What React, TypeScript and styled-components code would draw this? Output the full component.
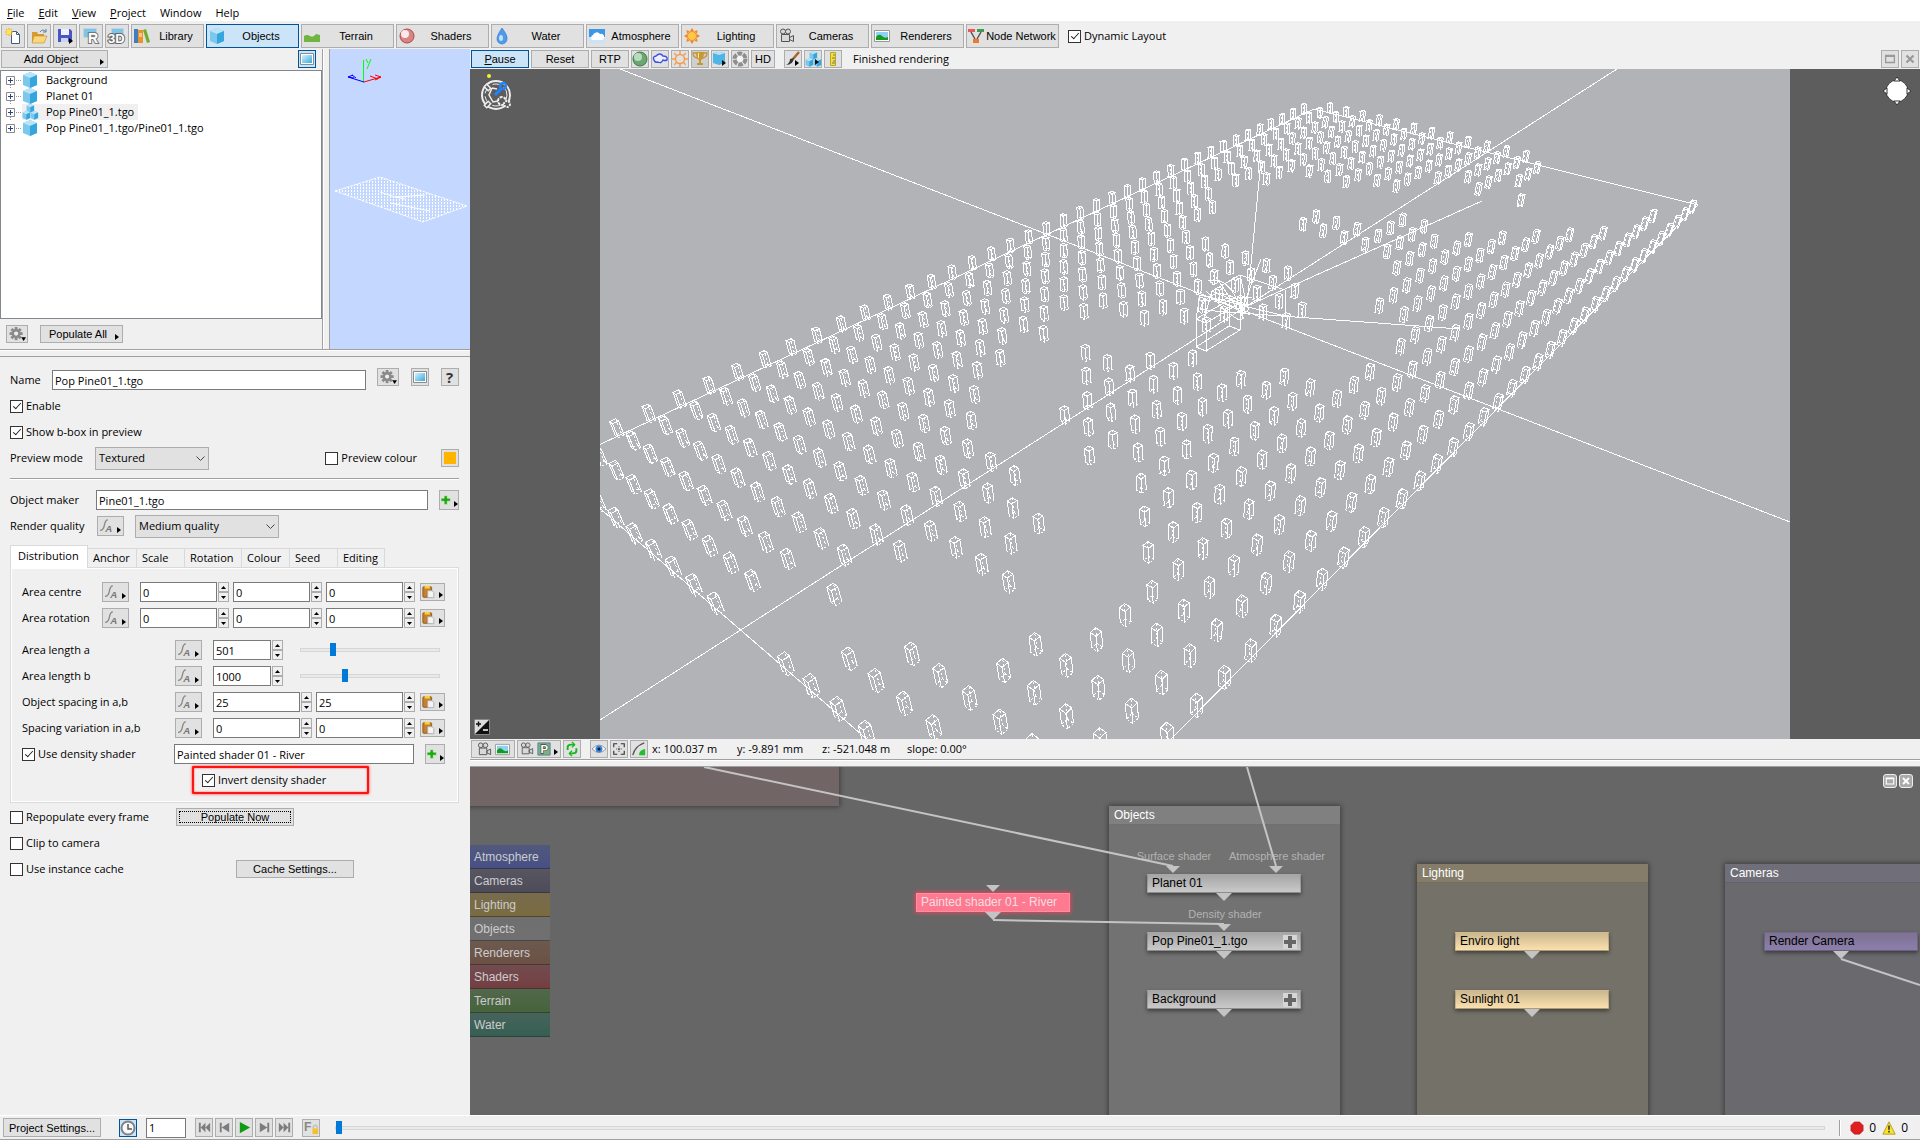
import React from 'react';
import styled, { createGlobalStyle, css } from 'styled-components';

const UI = '"Open Sans", "Noto Sans", sans-serif';
const ARIAL = '"Liberation Sans", Arial, sans-serif';

const Global = createGlobalStyle`
  *, *::before, *::after { box-sizing: border-box; }
  html, body { margin: 0; height: 100%; overflow: hidden; }
  body { font-family: ${UI}; font-size: 11px; line-height: 16px; color: #000; background: #f0f0f0; }
  button, input, select { font: inherit; color: inherit; margin: 0; }
  svg { display: block; flex: none; }
`;

/* ---------- icons ---------- */

const cube = (
  <>
    <path d="M8 0l7 3v10l-7 3-7-3V3z" fill="#7cc8ec" />
    <path d="M8 0l7 3-7 3-7-3z" fill="#b9e4f8" />
    <path d="M8 6l7-3v10l-7 3z" fill="#35a6dd" />
  </>
);
const cam = (
  <g fill="#d8d8d8" stroke="#555">
    <circle cx="4" cy="3.500" r="2.500" />
    <circle cx="9" cy="3.500" r="2.500" />
    <path d="M2.500 6.500h8v7h-8zM10.500 9.500l4-2v6l-4-2z" />
  </g>
);
const picture = (
  <>
    <path d="M.5 2.500h15v11H.5z" fill="#fff" stroke="#999" />
    <path d="M2 4h12v8H2z" fill="#8fd0f5" />
    <path d="M2 9q3-4 6-1t6 1v3H2z" fill="#159a1c" />
  </>
);
const cubes = (
  <>
    <g transform="translate(4 0) scale(.54)">{cube}</g>
    <g transform="translate(0 7) scale(.54)">{cube}</g>
    <g transform="translate(8 7) scale(.54)">{cube}</g>
  </>
);
const spikes = [0, 45, 90, 135, 180, 225, 270, 315];

const ICONS: Record<string, React.ReactNode> = {
  newFile: (
    <>
      <path d="M6.500 3.500h5l3 3v9h-8z" fill="#fff" stroke="#445d86" />
      <path d="M11.500 3.500v3h3" fill="none" stroke="#445d86" />
      {spikes.map((a) => (
        <path key={a} d="M4 4V0" stroke="#f5a800" transform={`rotate(${a} 4 4)`} />
      ))}
      <circle cx="4" cy="4" r="2.500" fill="#ffe54a" />
    </>
  ),
  open: (
    <>
      <path d="M1 4h5l1 2h6v8H1z" fill="#d89b32" />
      <path d="M3 8h13l-3 7H1z" fill="#fbd77c" stroke="#c08a2c" strokeWidth=".6" />
      <path d="M9 4q3-4 6 0M15 1v3h-3" fill="none" stroke="#5d7fa8" />
    </>
  ),
  save: (
    <>
      <path d="M1 1h12l2 2v11H1z" fill="#4a55c4" />
      <path d="M4 1h8v6H4z" fill="#eef1ff" />
      <path d="M4 10h7v4H4z" fill="#cdd3f5" />
      <path d="M12 10v6l4-3z" fill="#000" />
    </>
  ),
  render: (
    <>
      <path d="M.5.5h13v9H.5z" fill="#7ec5ea" stroke="#c5d3dc" />
      <text x="5" y="15" fontFamily={ARIAL} fontWeight="bold" fontSize="14" fill="#fff" stroke="#777" strokeWidth="2" paintOrder="stroke">R</text>
    </>
  ),
  threeD: (
    <>
      <path d="M2.500.5h12v8h-12z" fill="#7ec5ea" stroke="#c5d3dc" />
      <text x="-1" y="15" fontFamily={ARIAL} fontWeight="bold" fontSize="13" fill="#fff" stroke="#666" strokeWidth="2" paintOrder="stroke">3D</text>
    </>
  ),
  library: (
    <>
      <path d="M0 1h4v14H0z" fill="#3d7fb8" />
      <path d="M4 2h5v13H4z" fill="#f0902a" />
      <path d="M5 5h3v4H5z" fill="#fbc88e" />
      <path d="M9 2l3-1 4 13-3 1z" fill="#6fae2f" />
    </>
  ),
  cube,
  cubes,
  terrain: <path d="M0 8q3-2 6 0t6-2l4 1v7H0z" fill="#6fb53f" />,
  shader: (
    <>
      <circle cx="8" cy="8" r="7" fill="#d98484" stroke="#b04848" />
      <circle cx="6" cy="6" r="4" fill="#fbeaea" />
    </>
  ),
  water: (
    <>
      <path d="M8 0q6 8 5 11a5 5 0 0 1-10 0q0-4 5-11z" fill="#4d9bea" stroke="#2d6fc4" strokeWidth=".6" />
      <ellipse cx="7" cy="10" rx="2" ry="3" fill="#c2e1fb" />
    </>
  ),
  atmosphere: (
    <>
      <path d="M0 1h16v14H0z" fill="#3d97e8" />
      <path d="M0 9h16v6H0z" fill="#c8e4fa" />
      <path d="M3 12a3 3 0 0 1 1-5 4 4 0 0 1 7-1 3 3 0 0 1 2 6z" fill="#fff" />
    </>
  ),
  lighting: (
    <>
      {spikes.map((a) => (
        <path key={a} d="M6 3l2-3 2 3z" fill="#f08a24" transform={`rotate(${a} 8 8)`} />
      ))}
      <circle cx="8" cy="8" r="4.500" fill="#fdc84a" stroke="#f08a24" />
    </>
  ),
  sun: (
    <g fill="none" stroke="#f59a4a" strokeWidth="1.400">
      {spikes.map((a) => (
        <path key={a} d="M8 0v3" transform={`rotate(${a} 8 8)`} />
      ))}
      <circle cx="8" cy="8" r="4.500" />
    </g>
  ),
  camera: cam,
  picture,
  nodes: (
    <>
      <path d="M3 4l4 7M13 4l-4 7" stroke="#555" strokeWidth="1.500" />
      <path d="M0 1h7v3H0z" fill="#e85858" />
      <path d="M9 1h7v3H9z" fill="#3f9a4e" />
      <path d="M5 11h6v4H5z" fill="#f0782a" />
    </>
  ),
  panel: (
    <>
      <defs>
        <linearGradient id="screen" x1="0" y1="0" x2="1" y2="1">
          <stop offset="0" stopColor="#d4f1fc" />
          <stop offset="1" stopColor="#3aa9dd" />
        </linearGradient>
      </defs>
      <path d="M1.500 2.500h13v11h-13z" fill="#fff" stroke="#8a8a8a" />
      <path d="M3 4h10v8H3z" fill="url(#screen)" />
    </>
  ),
  ball: (
    <>
      <circle cx="8" cy="8" r="7" fill="#6aa873" stroke="#3f7a48" />
      <circle cx="6" cy="6" r="4" fill="#b9dcbe" />
    </>
  ),
  cloud: <path d="M2 9q-2-3 2-4 4-4 7 0 5 0 4 4-3 1-4 0-2 4-5 2-3 1-4-2z" fill="#eef" stroke="#3a50e0" strokeWidth="1.400" />,
  cup: (
    <>
      <path d="M4 1h8q0 7-3 8v3h2v2H5v-2h2V9Q4 8 4 1z" fill="#c89632" />
      <path d="M4 2H1q0 4 4 5M12 2h3q0 4-4 5" fill="none" stroke="#c89632" strokeWidth="1.300" />
      <path d="M6 2h1v5H6z" fill="#fbe9a8" />
    </>
  ),
  boxPlay: (
    <>
      <path d="M1 2l6-1 6 1v10l-6 2-6-2z" fill="#4fb4e6" />
      <path d="M1 2l6-1 6 1-6 2z" fill="#b9e4f8" />
      <path d="M10 9v6l4-3z" fill="#111" />
    </>
  ),
  shutter: (
    <>
      <circle cx="8" cy="8" r="5.500" fill="none" stroke="#8e8e8e" strokeWidth="4" strokeDasharray="4.500 1.200" />
      <circle cx="8" cy="8" r="3" fill="#f4f4f4" />
    </>
  ),
  brush: (
    <>
      <path d="M14 1L8 8" stroke="#a8642a" strokeWidth="2.500" />
      <path d="M9 7q-1 7-8 7 4-2 4-6z" fill="#333" />
      <path d="M10 9v6l4-3z" fill="#000" />
    </>
  ),
  cubesPlay: (
    <>
      {cubes}
      <path d="M10 8v6l4-3z" fill="#111" />
    </>
  ),
  ruler: (
    <>
      <path d="M5.500 1.500h5v13h-5z" fill="#f5e03a" stroke="#b8a62a" />
      <path d="M10 4H8M10 7H7M10 10H8M10 12H7" stroke="#776" />
    </>
  ),
  gear: (
    <>
      {spikes.map((a) => (
        <path key={a} d="M5 0h3v4H5z" fill="#8a8a8a" transform={`rotate(${a} 6.500 7)`} />
      ))}
      <circle cx="6.500" cy="7" r="3.500" fill="#eee" stroke="#8a8a8a" strokeWidth="2.500" />
      <path d="M12 11h5l-2.500 4z" fill="#000" />
    </>
  ),
  help: <text x="4" y="14" fontFamily={UI} fontWeight="bold" fontSize="15" fill="#333">?</text>,
  func: (
    <>
      <path d="M0 13q4 0 5-6t4-6" fill="none" stroke="#888" strokeWidth="1.500" />
      <text x="6" y="15" fontFamily={ARIAL} fontWeight="bold" fontStyle="italic" fontSize="11" fill="#777">A</text>
    </>
  ),
  plus: <path d="M5 1h5v4h5v5h-5v5H5v-5H0V5h5z" fill="#1fa80f" stroke="#d5f0d0" />,
  paste: (
    <>
      <rect x="1" y="2" width="10" height="12" rx="1" fill="#c87f2c" stroke="#8a5518" />
      <path d="M3 1h6v3H3z" fill="#f7d23c" />
      <path d="M6.500 6.500h5l2 2v6h-7z" fill="#f4f4f4" stroke="#aaa" />
    </>
  ),
  clock: (
    <>
      <circle cx="8" cy="8" r="6.500" fill="#fafafa" stroke="#7b8288" strokeWidth="2" />
      <path d="M8 4v5h4" fill="none" stroke="#555" strokeWidth="1.500" />
    </>
  ),
  first: <path d="M2 3h2v10H2zM9 3v10L4 8zM14 3v10L9 8z" fill="#7c7c7c" />,
  prev: <path d="M3 3h2v10H3zM13 3v10L5 8z" fill="#7c7c7c" />,
  play: <path d="M3 2v12l11-6z" fill="#0f9b12" />,
  next: <path d="M11 3h2v10h-2zM3 3v10l8-5z" fill="#7c7c7c" />,
  last: <path d="M12 3h2v10h-2zM7 3v10l5-5zM2 3v10l5-5z" fill="#7c7c7c" />,
  lock: (
    <>
      <text x="0" y="12" fontFamily={ARIAL} fontWeight="bold" fontSize="13" fill="#888">F</text>
      <path d="M10 9V7q2-3 4 0v2" fill="none" stroke="#bbb" strokeWidth="1.400" />
      <path d="M9 9h6v6H9z" fill="#f5c02c" />
    </>
  ),
  refresh: (
    <g fill="none" stroke="#17b81f" strokeWidth="2.200">
      <path d="M3 9V6q0-3 4-3h4M13 7v3q0 3-4 3H5" />
      <path d="M8 0l3 3-3 3M8 10l-3 3 3 3" strokeWidth="1.500" />
    </g>
  ),
  eye: (
    <>
      <path d="M0 8q8-9 16 0-8 8-16 0z" fill="#fff" stroke="#889" />
      <circle cx="8" cy="8" r="4" fill="#3f87dd" />
      <circle cx="8" cy="8" r="1.800" fill="#123" />
    </>
  ),
  frame: (
    <g fill="none" stroke="#333" strokeWidth="1.300">
      <path d="M2 6V2h4M10 2h4v4M14 10v4h-4M6 14H2v-4" />
      <path d="M8 5v1M8 10v1M5 8h1M10 8h1M8 7v2M7 8h2" />
    </g>
  ),
  curve: (
    <>
      <path d="M1 15Q3 5 14 1" fill="none" stroke="#555" strokeWidth="1.500" />
      <path d="M8 15q0-6 7-7v7z" fill="#1fc02a" />
    </>
  ),
  pBadge: (
    <>
      <path d="M1 1h14v14H1z" fill="#7fb07f" stroke="#4f7f9f" />
      <text x="4" y="13" fontFamily={ARIAL} fontWeight="bold" fontSize="13" fill="#fff" stroke="#444" strokeWidth="1.500" paintOrder="stroke">P</text>
    </>
  ),
  maximize: <path d="M3 4h10v8H3zM3 5h10" fill="none" stroke="currentColor" strokeWidth="1.500" />,
  close: <path d="M4 4l8 8M12 4l-8 8" fill="none" stroke="currentColor" strokeWidth="2.500" />,
  stop: <path d="M5 1h6l4 4v6l-4 4H5l-4-4V5z" fill="#e02020" stroke="#a81010" strokeWidth=".6" />,
  warn: (
    <>
      <path d="M8 1l7 14H1z" fill="#fbe32a" stroke="#a8961a" />
      <path d="M8 5v5M8 11v2" stroke="#333" strokeWidth="1.800" />
    </>
  ),
};

const Icon = ({ name, size = 16 }: { name: string; size?: number }) => (
  <svg width={size} height={size} viewBox="0 0 16 16" aria-hidden="true" overflow="visible">
    {ICONS[name]}
  </svg>
);

const Arrow = () => (
  <svg width="4" height="6" viewBox="0 0 4 6" aria-hidden="true">
    <path d="M0 0v6l4-3z" />
  </svg>
);

/* ---------- controls ---------- */

const Btn = styled.button<{ $w?: number; $h?: number; $on?: boolean; $down?: boolean; $wide?: boolean }>`
  display: flex;
  flex: none;
  align-items: center;
  justify-content: ${(p) => (p.$wide ? 'space-between' : 'center')};
  gap: 3px;
  width: ${(p) => (p.$w ? `${p.$w}px` : 'auto')};
  height: ${(p) => p.$h ?? 18}px;
  padding: 0 ${(p) => (p.$wide ? 3 : 0)}px;
  border: 1px solid ${(p) => (p.$on ? '#005499' : '#adadad')};
  background: ${(p) => (p.$on ? '#cce4f7' : p.$down ? '#cfcfcf' : '#e1e1e1')};
  font-family: ${ARIAL};
  font-size: 11px;
  line-height: 16px;
  white-space: nowrap;
`;
const ArrowBtn = styled(Btn)`
  & > svg:last-child {
    align-self: flex-end;
    margin-bottom: 2px;
  }
`;
const BtnText = styled.span`
  flex: 1;
  text-align: center;
`;
const ModeBtn = styled(Btn)`
  padding: 0 3px 0 2px;
  gap: 2px;
`;
const FocusBtn = styled(Btn)`
  position: relative;
  &::after {
    content: '';
    position: absolute;
    inset: 2px;
    border: 1px dotted #000;
  }
`;

const Check = styled.input.attrs({ type: 'checkbox' })`
  appearance: none;
  position: relative;
  flex: none;
  width: 13px;
  height: 13px;
  border: 1px solid #333;
  background: #fff;
  &:checked::after {
    content: '';
    position: absolute;
    left: 4px;
    top: 0;
    width: 4px;
    height: 8px;
    border: solid #222;
    border-width: 0 1px 1px 0;
    transform: rotate(42deg);
  }
`;
const CheckLabel = styled.label`
  display: flex;
  align-items: center;
  gap: 3px;
  white-space: nowrap;
`;
const Box = ({ text, on }: { text: string; on?: boolean }) => (
  <CheckLabel>
    <Check defaultChecked={on} />
    {text}
  </CheckLabel>
);

const Field = styled.input<{ $w?: number }>`
  flex: ${(p) => (p.$w ? 'none' : '1')};
  min-width: 0;
  width: ${(p) => (p.$w ? `${p.$w}px` : 'auto')};
  height: 20px;
  padding: 0 2px;
  border: 1px solid #7a7a7a;
  background: #fff;
`;

const SpinWrap = styled.span`
  display: flex;
  gap: 1px;
  margin-right: 4px;
`;
const SpinCol = styled.span`
  display: grid;
  grid-template-rows: 10px 10px;
  width: 11px;
`;
const SpinBtn = styled.button`
  display: grid;
  place-items: center;
  padding: 0;
  border: 1px solid #adadad;
  background: #f0f0f0;
`;
const Spin = ({ w, value, label }: { w: number; value: string; label: string }) => (
  <SpinWrap>
    <Field $w={w} defaultValue={value} aria-label={label} />
    <SpinCol>
      <SpinBtn aria-label={`${label} up`}>
        <svg width="5" height="3" viewBox="0 0 5 3"><path d="M0 3h5L2.500 0z" /></svg>
      </SpinBtn>
      <SpinBtn aria-label={`${label} down`}>
        <svg width="5" height="3" viewBox="0 0 5 3"><path d="M0 0h5L2.500 3z" /></svg>
      </SpinBtn>
    </SpinCol>
  </SpinWrap>
);

const SelectWrap = styled.span<{ $w: number }>`
  position: relative;
  width: ${(p) => p.$w}px;
  svg { position: absolute; right: 4px; top: 9px; pointer-events: none; }
`;
const Select = styled.select`
  appearance: none;
  width: 100%;
  height: 23px;
  padding: 0 3px;
  border: 1px solid #adadad;
  border-radius: 0;
  background: #e1e1e1;
`;
const Combo = ({ w, value, id }: { w: number; value: string; id: string }) => (
  <SelectWrap $w={w}>
    <Select id={id} defaultValue={value}>
      <option>{value}</option>
    </Select>
    <svg width="9" height="6" viewBox="0 0 9 6"><path d="M.5.5l4 4 4-4" fill="none" stroke="#444" /></svg>
  </SelectWrap>
);

const Range = styled.input.attrs({ type: 'range' })<{ $w?: number }>`
  appearance: none;
  flex: ${(p) => (p.$w ? 'none' : '1')};
  width: ${(p) => (p.$w ? `${p.$w}px` : 'auto')};
  height: 14px;
  background: transparent;
  &::-webkit-slider-runnable-track {
    height: 4px;
    border: 1px solid #d6d6d6;
    background: #e7eaea;
  }
  &::-webkit-slider-thumb {
    appearance: none;
    width: 6px;
    height: 13px;
    margin-top: -6px;
    background: #007ad9;
  }
`;

/* ---------- frame ---------- */

const Shell = styled.div`
  display: flex;
  flex-direction: column;
  height: 100vh;
`;
const MenuBar = styled.nav`
  display: flex;
  gap: 14px;
  height: 21px;
  padding: 4px 7px 0;
  background: #fff;
  button { padding: 0; border: 0; background: none; line-height: 16px; height: 17px; }
`;
const ToolBar = styled.div`
  display: flex;
  align-items: center;
  gap: 2px;
  height: 28px;
  padding: 2px 1px 0;
`;
const DynamicLayout = styled.div`
  margin-left: 7px;
`;
const Body = styled.div`
  display: flex;
  flex: 1;
  min-height: 0;
`;
const Left = styled.aside`
  display: flex;
  flex-direction: column;
  flex: none;
  width: 470px;
`;
const Right = styled.main`
  display: flex;
  flex: 1;
  flex-direction: column;
  min-width: 0;
`;
const TopPane = styled.div`
  display: flex;
  height: 300px;
`;
const TreePane = styled.section`
  display: flex;
  flex-direction: column;
  width: 322px;
`;
const TreeHead = styled.div`
  display: flex;
  justify-content: space-between;
  padding: 1px 6px 2px 1px;
`;
const Tree = styled.ul`
  flex: 1;
  margin: 0;
  padding: 1px 5px;
  list-style: none;
  border: 1px solid #828790;
  background: #fff;
`;
const TreeRow = styled.li`
  display: flex;
  align-items: center;
  height: 16px;
`;
const TreeName = styled.span<{ $on?: boolean }>`
  display: flex;
  align-items: center;
  gap: 8px;
  padding-right: 4px;
  background: ${(p) => (p.$on ? '#f0f0f0' : 'none')};
`;
const TreeFoot = styled.div`
  display: flex;
  gap: 12px;
  padding: 6px 6px;
`;
const VSplit = styled.div`
  width: 8px;
  border-left: 1px solid #a0a0a0;
  border-right: 1px solid #a0a0a0;
  box-shadow: inset 1px 0 #fff;
`;
const Preview = styled.div`
  flex: 1;
  background: #c3d7ff;
`;
const HSplit = styled.div`
  flex: none;
  height: 8px;
  border-top: 1px solid #a0a0a0;
  border-bottom: 1px solid #a0a0a0;
  box-shadow: inset 0 1px #fff;
`;

/* ---------- property form ---------- */

const Form = styled.section`
  flex: 1;
  min-height: 0;
  padding: 10px 11px 0 10px;
`;
const Row = styled.div<{ $top?: number }>`
  display: flex;
  align-items: center;
  height: 26px;
  margin-top: ${(p) => p.$top ?? 0}px;
`;
const RowLabel = styled.label<{ $w: number }>`
  flex: none;
  width: ${(p) => p.$w}px;
  white-space: nowrap;
`;
const Space = styled.span<{ $w?: number }>`
  flex: ${(p) => (p.$w ? 'none' : '1')};
  width: ${(p) => p.$w ?? 0}px;
`;
const IconSet = styled.div`
  display: flex;
  gap: 12px;
  margin: 0 0 6px 11px;
`;
const Rule = styled.hr`
  height: 2px;
  margin: 7px 0;
  border: 0;
  border-top: 1px solid #a0a0a0;
  background: #fff;
`;
const Swatch = styled.button`
  width: 18px;
  height: 18px;
  padding: 0;
  border: 1px solid #adadad;
  background: #ffb400;
  box-shadow: inset 0 0 0 2px #e1e1e1;
`;
const Tabs = styled.div`
  display: flex;
  align-items: flex-end;
  height: 23px;
  margin-top: 6px;
`;
const Tab = styled.button<{ $w: number; $on?: boolean }>`
  width: ${(p) => p.$w}px;
  height: 20px;
  padding: 0 0 0 5px;
  text-align: left;
  border: 1px solid #d9d9d9;
  border-left-width: 0;
  background: #f0f0f0;
  ${(p) =>
    p.$on &&
    css`
      position: relative;
      height: 23px;
      padding: 0 0 2px 7px;
      border-left-width: 1px;
      border-bottom: 0;
      background: #fff;
    `}
`;
const TabPanel = styled.div`
  margin: -1px 0 1px;
  padding: 11px 11px 9px;
  border: 1px solid #dcdcdc;
  box-shadow: inset 0 0 0 1px #fff;
`;
const Marked = styled.div`
  display: flex;
  align-items: center;
  width: 177px;
  height: 28px;
  padding-left: 8px;
  border: 2px solid #ff1414;
  border-radius: 1px;
  box-shadow: 0 0 3px #ff3030, inset 0 0 2px #ff5050;
`;

const Func = () => (
  <ArrowBtn $w={27} $h={20} aria-label="Function"><Icon name="func" size={14} /><Arrow /></ArrowBtn>
);
const Paste = () => (
  <ArrowBtn $w={25} aria-label="Paste"><Icon name="paste" size={14} /><Arrow /></ArrowBtn>
);
const AddBtn = () => (
  <ArrowBtn $w={20} $h={20} aria-label="Add"><Icon name="plus" size={10} /><Arrow /></ArrowBtn>
);

const TripleRow = ({ label }: { label: string }) => (
  <Row>
    <RowLabel as="span" $w={80}>{label}</RowLabel>
    <Func />
    <Space $w={11} />
    {['x', 'y', 'z'].map((a) => (
      <Spin key={a} w={77} value="0" label={`${label} ${a}`} />
    ))}
    <Space $w={1} />
    <Paste />
  </Row>
);
const LengthRow = ({ label, value, pos, top }: { label: string; value: string; pos: number; top?: number }) => (
  <Row $top={top}>
    <RowLabel as="span" $w={153}>{label}</RowLabel>
    <Func />
    <Space $w={11} />
    <Spin w={58} value={value} label={label} />
    <Space $w={13} />
    <Range $w={140} min={0} max={134} defaultValue={pos} aria-label={`${label} slider`} />
  </Row>
);
const PairRow = ({ label, value }: { label: string; value: string }) => (
  <Row>
    <RowLabel as="span" $w={153}>{label}</RowLabel>
    <Func />
    <Space $w={11} />
    <Spin w={87} value={value} label={`${label} first`} />
    <Spin w={87} value={value} label={`${label} second`} />
    <Space $w={1} />
    <Paste />
  </Row>
);

/* ---------- 3D scene ---------- */

type V = [number, number, number];
type P2 = [number, number];

const CORNERS: P2[] = [[714, 40], [1098, 136], [431, 812], [-48, 398]];
const CX = 595;
const CY = 335;
const FOCAL = 1022;

const RIVER: P2[] = [
  [112, 569], [125, 551], [165, 525], [201, 507], [222, 507], [222, 551], [256, 546], [254, 507], [281, 504], [306, 506],
  [330, 481], [357, 499], [383, 516], [405, 538], [430, 530], [432, 476], [455, 474], [460, 452], [432, 437], [435, 408],
  [408, 389], [388, 374], [390, 340], [392, 313], [412, 309], [415, 282], [432, 280], [458, 282], [460, 255], [472, 251],
  [476, 260], [495, 260], [500, 248], [515, 255], [535, 258], [540, 267], [560, 267], [575, 255], [580, 266], [600, 282],
  [625, 269], [650, 260], [690, 269], [710, 262], [709, 238], [703, 225], [698, 214], [680, 203], [655, 193], [632, 189],
  [610, 184], [598, 177], [594, 158], [612, 150], [622, 122], [650, 121], [675, 122], [700, 111], [728, 121], [747, 125],
  [765, 121], [797, 130], [815, 122], [840, 122], [868, 120], [872, 134], [888, 134], [890, 117], [912, 117], [914, 146],
  [925, 146], [926, 118], [943, 111], [943, 98], [940, 75], [1120, 105], [1110, 142], [1093, 143], [1080, 152], [1066, 160],
  [1058, 155], [1048, 154], [1040, 159], [1015, 167], [1000, 165], [975, 168], [962, 171], [940, 170], [930, 173], [905, 172],
  [895, 175], [870, 173], [850, 179], [838, 173], [830, 158], [805, 152], [785, 163], [770, 164], [758, 160], [737, 155],
  [704, 157], [692, 164], [704, 173], [724, 178], [745, 187], [766, 194], [785, 206], [785, 217], [800, 215], [785, 228],
  [770, 244], [775, 254], [792, 250], [795, 264], [805, 271], [790, 286], [795, 306], [771, 303], [754, 315], [737, 328],
  [720, 323], [698, 315], [685, 306], [670, 314], [641, 309], [625, 316], [605, 308], [593, 287], [572, 299], [551, 289],
  [531, 299], [508, 292], [486, 280], [475, 311], [475, 335], [452, 345], [455, 362], [475, 365], [478, 400], [500, 400],
  [505, 387], [525, 394], [530, 428], [532, 457], [536, 491], [538, 525], [512, 544], [485, 569], [455, 583], [436, 572],
  [420, 588], [395, 598], [370, 622], [345, 605], [313, 583], [290, 590], [275, 592], [235, 588], [215, 602], [186, 592],
  [170, 613],
];

const inside = (x: number, y: number, poly: P2[]) => {
  let hit = false;
  for (let i = 0, j = poly.length - 1; i < poly.length; j = i++) {
    const [xi, yi] = poly[i];
    const [xj, yj] = poly[j];
    if (yi > y !== yj > y && x < ((xj - xi) * (y - yi)) / (yj - yi) + xi) hit = !hit;
  }
  return hit;
};

/* Projective map of the unit square onto four corners, as matrix columns. */
const squareMap = ([p0, p1, p2, p3]: P2[]): V[] => {
  const dx1 = p1[0] - p2[0], dx2 = p3[0] - p2[0], sx = p0[0] - p1[0] + p2[0] - p3[0];
  const dy1 = p1[1] - p2[1], dy2 = p3[1] - p2[1], sy = p0[1] - p1[1] + p2[1] - p3[1];
  const det = dx1 * dy2 - dx2 * dy1;
  const g = (sx * dy2 - dx2 * sy) / det;
  const h = (dx1 * sy - sx * dy1) / det;
  return [
    [p1[0] - p0[0] + g * p1[0], p1[1] - p0[1] + g * p1[1], g],
    [p3[0] - p0[0] + h * p3[0], p3[1] - p0[1] + h * p3[1], h],
    [p0[0], p0[1], 1],
  ];
};

const buildCamera = () => {
  const [c1, c2, c3] = squareMap(CORNERS);
  const m1 = c1.map((n) => n / 500) as V;
  const m2 = c2.map((n) => n / 1000) as V;
  const un = (c: V): V => [(c[0] - CX * c[2]) / FOCAL, (c[1] - CY * c[2]) / FOCAL, c[2]];
  const a = un(m1), b = un(m2);
  const la = Math.hypot(...a), lb = Math.hypot(...b);
  const s = (la + lb) / 2 / (la * lb);
  const n: V = [
    (a[1] * b[2] - a[2] * b[1]) * s,
    (a[2] * b[0] - a[0] * b[2]) * s,
    (a[0] * b[1] - a[1] * b[0]) * s,
  ];
  const sign = n[1] > 0 ? -1 : 1;
  const up: V = [
    sign * (FOCAL * n[0] + CX * n[2]),
    sign * (FOCAL * n[1] + CY * n[2]),
    sign * n[2],
  ];
  return (x: number, y: number, z: number): P2 => {
    const w = m1[2] * x + m2[2] * y + up[2] * z + c3[2];
    return [
      (m1[0] * x + m2[0] * y + up[0] * z + c3[0]) / w,
      (m1[1] * x + m2[1] * y + up[1] * z + c3[1]) / w,
    ];
  };
};

const fmt = (p: P2) => `${p[0].toFixed(1)} ${p[1].toFixed(1)}`;

const TREE_HALF_WIDTH = 2.3;
const TREE_HEIGHT = 13;

const buildTrees = () => {
  const project = buildCamera();
  const r = TREE_HALF_WIDTH;
  let solid = '';
  let dotted = '';
  for (let i = 0; i <= 20; i++) {
    for (let j = 0; j <= 40; j++) {
      if (i === 0 && j === 0) continue;
      const x = i * 25, y = j * 25;
      const [sx, sy] = project(x, y, 0);
      if (sx < -30 || sx > 1220 || sy > 720 || inside(sx, sy + 4, RIVER)) continue;
      const ring = (z: number) => [project(x - r, y - r, z), project(x + r, y - r, z), project(x + r, y + r, z), project(x - r, y + r, z)];
      const lo = ring(0), hi = ring(TREE_HEIGHT);
      solid += `M${hi.map(fmt).join('L')}Z`;
      [1, 2, 3].forEach((k) => { solid += `M${fmt(lo[k])}L${fmt(hi[k])}`; });
      dotted += `M${lo.map(fmt).join('L')}ZM${fmt(lo[0])}L${fmt(hi[0])}`;
    }
  }
  return { solid, dotted };
};

const TREES = buildTrees();

const ViewArea = styled.div`
  position: relative;
  display: flex;
  flex: 1;
  justify-content: center;
  min-height: 0;
  overflow: hidden;
  background: #5d5d5d;
`;
const SceneSvg = styled.svg`
  height: 100%;
  aspect-ratio: 1190 / 670;
  background: #b1b3b7;
`;
const Compass = styled.div`
  position: absolute;
  left: 8px;
  top: 4px;
`;
const Orbit = styled.div`
  position: absolute;
  right: 9px;
  top: 8px;
`;
const Exposure = styled.div`
  position: absolute;
  left: 4px;
  bottom: 4px;
`;

const Scene = () => (
  <SceneSvg viewBox="0 0 1190 670">
    <g stroke="#fff" fill="none" shapeRendering="crispEdges">
      <path d="M-48 398L714 40L1098 136L431 812Z" />
      <path d="M20 0L1190 453M0 651L1017 0" />
      <path d="M647 237L661 91M647 237L882 132M640 244L860 260" />
      <path d="M596 250V278L606 282V254ZM606 254L640 234V261L606 282M596 250L629 231V257L596 278M629 231L640 234M629 257L640 261" />
      <path d="M640 206L685 221V247L640 236ZM604 250L612 222L640 206M647 237L600 226L596 250M640 206L647 237L612 222" />
      <path d="M642 240L661 190M604 226L650 246M600 240Q612 214 640 232T600 240M608 212Q628 206 640 238T606 222M616 208L644 250M598 232L652 228" />
      <path d={TREES.solid} />
      <path d={TREES.dotted} strokeDasharray="2 2" />
    </g>
  </SceneSvg>
);

/* ---------- viewport bars ---------- */

const ViewBar = styled.div`
  display: flex;
  align-items: center;
  gap: 2px;
  height: 20px;
  padding: 0 1px;
`;
const StatusBar = styled.div`
  display: flex;
  align-items: center;
  gap: 2px;
  height: 20px;
  padding: 0 1px;
`;
const Coord = styled.span<{ $w: number }>`
  width: ${(p) => p.$w}px;
  padding-left: 2px;
  white-space: nowrap;
`;
const ViewText = styled.span`
  padding-left: 9px;
`;
const GhostBtn = styled(Btn)`
  color: #999;
`;

/* ---------- node network ---------- */

const Network = styled.section`
  position: relative;
  flex: none;
  height: 348px;
  overflow: hidden;
  background: #666;
  font-family: ${ARIAL};
  font-size: 12px;
`;
const Group = styled.div<{ $x: number; $y: number; $w: number; $h?: number; $bg: string }>`
  position: absolute;
  left: ${(p) => p.$x}px;
  top: ${(p) => p.$y}px;
  width: ${(p) => p.$w}px;
  height: ${(p) => p.$h ?? 400}px;
  background: ${(p) => p.$bg};
  box-shadow: 0 0 5px 1px rgba(0, 0, 0, 0.4);
`;
const GroupTitle = styled.h2<{ $bg: string }>`
  margin: 0;
  height: 19px;
  padding: 2px 5px;
  font-size: 12px;
  font-weight: 400;
  line-height: 15px;
  color: #fff;
  background: ${(p) => p.$bg};
  border-bottom: 1px solid rgba(0, 0, 0, 0.12);
`;
const Node = styled.button<{ $x: number; $y: number; $tone: string }>`
  position: absolute;
  left: ${(p) => p.$x}px;
  top: ${(p) => p.$y}px;
  display: flex;
  align-items: center;
  justify-content: space-between;
  width: 154px;
  height: 19px;
  padding: 0 3px 0 4px;
  font-family: ${ARIAL};
  font-size: 12px;
  line-height: 17px;
  border: 1px solid rgba(0, 0, 0, 0.16);
  box-shadow: 0 2px 4px rgba(0, 0, 0, 0.45);
  ${(p) =>
    ({
      gray: 'background: linear-gradient(#a6a6a6, #c9c9c9);',
      sand: 'background: linear-gradient(#cbb88f, #fbe0ae);',
      violet: 'background: linear-gradient(#7d7391, #8c7eac);',
      pink: 'background: #ff7a90; color: #f3dfe2; border-color: #ff8fa0; box-shadow: 0 0 4px 1px #e0485f;',
    })[p.$tone]}
`;
const Port = styled.span<{ $x: number; $y: number }>`
  position: absolute;
  left: ${(p) => p.$x}px;
  top: ${(p) => p.$y}px;
  width: 150px;
  margin-left: -75px;
  text-align: center;
  font-size: 11px;
  line-height: 14px;
  color: #b2b2b2;
`;
const Wires = styled.svg`
  position: absolute;
  inset: 0;
  width: 100%;
  height: 100%;
  pointer-events: none;
`;
const Categories = styled.div`
  position: absolute;
  left: 0;
  top: 78px;
  width: 80px;
`;
const Category = styled.button<{ $bg: string }>`
  display: block;
  width: 100%;
  height: 24px;
  padding: 0 4px;
  text-align: left;
  font-family: ${ARIAL};
  font-size: 12px;
  color: #ccc;
  border: 0;
  border-bottom: 1px solid rgba(0, 0, 0, 0.35);
  background: ${(p) => p.$bg} linear-gradient(rgba(110, 110, 110, 0.3), transparent);
`;
const NetButtons = styled.div`
  position: absolute;
  right: 7px;
  top: 7px;
  display: flex;
  gap: 2px;
`;
const NetBtn = styled.button`
  display: grid;
  place-items: center;
  width: 14px;
  height: 14px;
  padding: 0;
  border: 1px solid #eee;
  border-radius: 3px;
  color: #fff;
  background: #aaa;
`;

const CATS: [string, string][] = [
  ['Atmosphere', '#465084'], ['Cameras', '#4e4b5a'], ['Lighting', '#7a6b40'], ['Objects', '#707070'],
  ['Renderers', '#6c5144'], ['Shaders', '#743e42'], ['Terrain', '#46643c'], ['Water', '#365f54'],
];
const NODE_LIST: { x: number; y: number; tone: string; text: string; plus?: boolean; inputs?: number[] }[] = [
  { x: 446, y: 126, tone: 'pink', text: 'Painted shader 01 - River', inputs: [523] },
  { x: 677, y: 107, tone: 'gray', text: 'Planet 01', inputs: [703, 806] },
  { x: 677, y: 165, tone: 'gray', text: 'Pop Pine01_1.tgo', plus: true, inputs: [754] },
  { x: 677, y: 223, tone: 'gray', text: 'Background', plus: true },
  { x: 985, y: 165, tone: 'sand', text: 'Enviro light' },
  { x: 985, y: 223, tone: 'sand', text: 'Sunlight 01' },
  { x: 1294, y: 165, tone: 'violet', text: 'Render Camera' },
];

/* ---------- bottom bar ---------- */

const BottomBar = styled.footer`
  display: flex;
  align-items: center;
  gap: 2px;
  height: 25px;
  padding: 0 8px 0 3px;
  border-top: 1px solid #fff;
  border-bottom: 1px solid #a0a0a0;
`;
const Divider = styled.span`
  width: 2px;
  height: 16px;
  margin: 0 7px 0 12px;
  border-left: 1px solid #a0a0a0;
  background: #fff;
`;
const Count = styled.span`
  padding: 0 4px 0 3px;
  font-size: 12px;
`;

const MODES: [string, string, boolean?][] = [
  ['cube', 'Objects', true], ['terrain', 'Terrain'], ['shader', 'Shaders'], ['water', 'Water'], ['atmosphere', 'Atmosphere'],
  ['lighting', 'Lighting'], ['camera', 'Cameras'], ['picture', 'Renderers'], ['nodes', 'Node Network'],
];
const MENUS: [string, boolean][] = [['File', true], ['Edit', true], ['View', true], ['Project', true], ['Window', false], ['Help', false]];
const TREE_ITEMS: [string, string, boolean?][] = [
  ['cube', 'Background'], ['cube', 'Planet 01'], ['cubes', 'Pop Pine01_1.tgo', true], ['cube', 'Pop Pine01_1.tgo/Pine01_1.tgo'],
];

const LeftPanel = () => (
  <Left>
    <TopPane>
      <TreePane>
        <TreeHead>
          <ArrowBtn $w={107} $wide><BtnText>Add Object</BtnText><Arrow /></ArrowBtn>
          <Btn $w={18} $on aria-label="Toggle preview"><Icon name="panel" /></Btn>
        </TreeHead>
        <Tree>
          {TREE_ITEMS.map(([icon, name, on], i) => (
            <TreeRow key={name}>
              <svg width="16" height="16" viewBox="0 0 16 16">
                <path d="M10 8.500h6" stroke="#999" strokeDasharray="1 1" />
                {i < 3 && <path d="M4.500 13v6" stroke="#999" strokeDasharray="1 1" />}
                <path d="M.5 4.500h8v8h-8z" fill="#fff" stroke="#8a8a8a" />
                <path d="M2 8.500h5M4.500 6v5" stroke="#24448c" />
              </svg>
              <TreeName $on={on}>
                <Icon name={icon} />
                {name}
              </TreeName>
            </TreeRow>
          ))}
        </Tree>
        <TreeFoot>
          <Btn $w={22} aria-label="Options"><Icon name="gear" size={15} /></Btn>
          <ArrowBtn $w={83} $wide><BtnText>Populate All</BtnText><Arrow /></ArrowBtn>
        </TreeFoot>
      </TreePane>
      <VSplit />
      <Preview>
        <svg width="140" height="300" viewBox="0 0 140 300">
          <path d="M33.500 33.500V11" stroke="#0f0" />
          <path d="M36 10l2 4M41 10l-4 10" stroke="#0f0" fill="none" />
          <path d="M34 33l-16-5 5-2M18 28l6 1M22 26l4 3" stroke="#00f" fill="none" />
          <path d="M34 33l17-5-6-2M51 28l-6 3M40 27l8 3" stroke="#f00" fill="none" />
          <defs>
            <pattern id="dots" width="3" height="3" patternUnits="userSpaceOnUse">
              <path d="M0 0h1v2H0z" fill="#fff" />
            </pattern>
          </defs>
          <path d="M5 142L50 128L137 157L93 173Z" fill="url(#dots)" stroke="#fff" strokeDasharray="3 1" />
          <path d="M50 143l15 5 30-2M60 154l40 8M65 148l10 2" fill="none" stroke="#fff" />
        </svg>
      </Preview>
    </TopPane>
    <HSplit />
    <Form>
      <Row>
        <RowLabel $w={42} htmlFor="name">Name</RowLabel>
        <Field id="name" defaultValue="Pop Pine01_1.tgo" />
        <IconSet>
          <Btn $w={22} aria-label="Options"><Icon name="gear" size={15} /></Btn>
          <Btn $w={18} aria-label="Preview"><Icon name="panel" /></Btn>
          <Btn $w={18} aria-label="Help"><Icon name="help" /></Btn>
        </IconSet>
      </Row>
      <Row><Box text="Enable" on /></Row>
      <Row><Box text="Show b-box in preview" on /></Row>
      <Row>
        <RowLabel $w={85} htmlFor="mode">Preview mode</RowLabel>
        <Combo id="mode" w={114} value="Textured" />
        <Space />
        <Box text="Preview colour" />
        <Space $w={24} />
        <Swatch aria-label="Preview colour" />
      </Row>
      <Rule />
      <Row>
        <RowLabel $w={86} htmlFor="maker">Object maker</RowLabel>
        <Field id="maker" defaultValue="Pine01_1.tgo" />
        <Space $w={11} />
        <AddBtn />
      </Row>
      <Row>
        <RowLabel $w={87} htmlFor="quality">Render quality</RowLabel>
        <Func />
        <Space $w={11} />
        <Combo id="quality" w={144} value="Medium quality" />
      </Row>
      <Tabs>
        <Tab $w={78} $on>Distribution</Tab>
        <Tab $w={49}>Anchor</Tab>
        <Tab $w={48}>Scale</Tab>
        <Tab $w={57}>Rotation</Tab>
        <Tab $w={48}>Colour</Tab>
        <Tab $w={48}>Seed</Tab>
        <Tab $w={47}>Editing</Tab>
      </Tabs>
      <TabPanel>
        <TripleRow label="Area centre" />
        <TripleRow label="Area rotation" />
        <LengthRow label="Area length a" value="501" pos={29} top={6} />
        <LengthRow label="Area length b" value="1000" pos={42} />
        <PairRow label="Object spacing in a,b" value="25" />
        <PairRow label="Spacing variation in a,b" value="0" />
        <Row>
          <RowLabel as="span" $w={152}><Box text="Use density shader" on /></RowLabel>
          <Field $w={240} defaultValue="Painted shader 01 - River" aria-label="Density shader" />
          <Space $w={11} />
          <AddBtn />
        </Row>
        <Row>
          <Space $w={170} />
          <Marked><Box text="Invert density shader" on /></Marked>
        </Row>
      </TabPanel>
      <Row>
        <RowLabel as="span" $w={166}><Box text="Repopulate every frame" /></RowLabel>
        <FocusBtn $w={118}>Populate Now</FocusBtn>
      </Row>
      <Row><Box text="Clip to camera" /></Row>
      <Row>
        <RowLabel as="span" $w={226}><Box text="Use instance cache" /></RowLabel>
        <Btn $w={118}>Cache Settings...</Btn>
      </Row>
    </Form>
  </Left>
);

const NetworkPanel = () => (
  <Network>
    <Group $x={-10} $y={-20} $w={379} $h={59} $bg="#716565" />
    <Group $x={639} $y={39} $w={231} $bg="#727272"><GroupTitle $bg="#808080">Objects</GroupTitle></Group>
    <Group $x={947} $y={97} $w={231} $bg="#747168"><GroupTitle $bg="#857d69">Lighting</GroupTitle></Group>
    <Group $x={1255} $y={97} $w={231} $bg="#6a696e"><GroupTitle $bg="#706e78">Cameras</GroupTitle></Group>
    <Port $x={704} $y={82}>Surface shader</Port>
    <Port $x={807} $y={82}>Atmosphere shader</Port>
    <Port $x={755} $y={140}>Density shader</Port>
    {NODE_LIST.map((n) => (
      <Node key={n.text} $x={n.x} $y={n.y} $tone={n.tone}>
        {n.text}
        {n.plus && (
          <svg width="14" height="14" viewBox="0 0 14 14">
            <path d="M0 0h14v14H0z" fill="#d6d6d6" />
            <path d="M5 1h4v4h4v4H9v4H5V9H1V5h4z" fill="#666" />
          </svg>
        )}
      </Node>
    ))}
    <Wires>
      <path d="M234 0L703 99M777 0L806 99M523 153L754 157M1371 192L1450 218" fill="none" stroke="#c4c4c4" strokeWidth="2" />
      {NODE_LIST.map((n) => (
        <g key={n.text} fill="#c4c4c4">
          <path d={`M${n.x + 69} ${n.y + 19}h16l-8 8z`} />
          {n.inputs?.map((x) => <path key={x} d={`M${x - 7} ${n.y - 8}h14l-7 7z`} />)}
        </g>
      ))}
    </Wires>
    <Categories>
      {CATS.map(([name, bg]) => <Category key={name} $bg={bg}>{name}</Category>)}
    </Categories>
    <NetButtons>
      <NetBtn aria-label="Maximise"><Icon name="maximize" size={12} /></NetBtn>
      <NetBtn aria-label="Close"><Icon name="close" size={12} /></NetBtn>
    </NetButtons>
  </Network>
);

export default function App() {
  return (
    <Shell>
      <Global />
      <MenuBar>
        {MENUS.map(([m, key]) => (
          <button key={m}>{key ? <><u>{m[0]}</u>{m.slice(1)}</> : m}</button>
        ))}
      </MenuBar>
      <ToolBar>
        {['newFile', 'open', 'save', 'render', 'threeD'].map((n) => (
          <Btn key={n} $w={24} $h={24} aria-label={n}><Icon name={n} /></Btn>
        ))}
        <ModeBtn $w={73} $h={24}><Icon name="library" /><BtnText>Library</BtnText></ModeBtn>
        {MODES.map(([icon, text, on]) => (
          <ModeBtn key={text} $w={93} $h={24} $on={on}><Icon name={icon} /><BtnText>{text}</BtnText></ModeBtn>
        ))}
        <DynamicLayout><Box text="Dynamic Layout" on /></DynamicLayout>
      </ToolBar>
      <Body>
        <LeftPanel />
        <Right>
          <ViewBar>
            <Btn $w={58} $on><span><u>P</u>ause</span></Btn>
            <Btn $w={58}>Reset</Btn>
            <Btn $w={38}>RTP</Btn>
            {['ball', 'cloud', 'sun', 'cup', 'boxPlay', 'shutter'].map((n) => (
              <Btn key={n} $w={18} $down={n === 'cup'} aria-label={n}><Icon name={n} /></Btn>
            ))}
            <Btn $w={24}>HD</Btn>
            <Space $w={5} />
            {['brush', 'cubesPlay', 'ruler'].map((n) => (
              <Btn key={n} $w={18} aria-label={n}><Icon name={n} /></Btn>
            ))}
            <ViewText>Finished rendering</ViewText>
            <Space />
            <GhostBtn $w={18} aria-label="Maximise view"><Icon name="maximize" size={14} /></GhostBtn>
            <GhostBtn $w={18} aria-label="Close view"><Icon name="close" size={14} /></GhostBtn>
          </ViewBar>
          <ViewArea>
            <Scene />
            <Compass>
              <svg width="34" height="38" viewBox="0 0 34 38" fill="none" stroke="#eee">
                <circle cx="11" cy="3" r="2" fill="#f5f032" stroke="none" />
                <circle cx="18" cy="22" r="14" strokeWidth="2" />
                <circle cx="18" cy="22" r="11" strokeDasharray="9 3" />
                <path d="M7 12l5 5M12 29l-5 5" strokeWidth="5" />
                <path d="M8 13l3 3M11 30l-3 3" stroke="#5d5d5d" strokeWidth="2" />
                <path d="M14 15l-3 7 4 7 5-1M14 15l5 1" strokeWidth="1.500" />
                <circle cx="25" cy="13" r="3" stroke="#1c84ff" strokeWidth="2" />
                <path d="M23 16l-6 6" stroke="#1c84ff" strokeWidth="3" />
                <circle cx="24" cy="28" r="4" fill="#5d5d5d" strokeWidth="2" strokeDasharray="3 1" />
                <circle cx="29" cy="31" r="3" fill="#5d5d5d" strokeWidth="2" strokeDasharray="2 1" />
              </svg>
            </Compass>
            <Orbit>
              <svg width="28" height="28" viewBox="0 0 28 28" fill="#fff" stroke="#333">
                <circle cx="14" cy="14" r="11" />
                <path d="M14 0l3 4h-6zM14 28l3-4h-6zM0 14l4-3v6zM28 14l-4-3v6z" />
              </svg>
            </Orbit>
            <Exposure>
              <svg width="16" height="16" viewBox="0 0 16 16">
                <path d="M.5.5h15v15H.5z" fill="#111" stroke="#888" />
                <path d="M1 15L15 1H1z" fill="#ddd" />
                <path d="M2 5h5M4.500 2.500v5" stroke="#111" strokeWidth="1.500" />
                <path d="M9 11h5" stroke="#fff" strokeWidth="1.500" />
              </svg>
            </Exposure>
          </ViewArea>
          <StatusBar>
            <Btn $w={44} aria-label="Copy view to camera"><Icon name="camera" size={15} /><Icon name="picture" size={15} /></Btn>
            <ArrowBtn $w={44} aria-label="Camera presets"><Icon name="camera" size={14} /><Icon name="pBadge" size={14} /><Arrow /></ArrowBtn>
            <Btn $w={18} aria-label="Refresh"><Icon name="refresh" size={14} /></Btn>
            <Space $w={5} />
            {['eye', 'frame', 'curve'].map((n) => (
              <Btn key={n} $w={18} aria-label={n}><Icon name={n} size={14} /></Btn>
            ))}
            <Coord $w={83}>x: 100.037 m</Coord>
            <Coord $w={83}>y: -9.891 mm</Coord>
            <Coord $w={83}>z: -521.048 m</Coord>
            <Coord $w={83}>slope: 0.00°</Coord>
          </StatusBar>
          <HSplit />
          <NetworkPanel />
        </Right>
      </Body>
      <BottomBar>
        <Btn $w={98} $h={19}>Project Settings...</Btn>
        <Space $w={14} />
        <Btn $w={18} $on aria-label="Time"><Icon name="clock" /></Btn>
        <Space $w={5} />
        <Field $w={40} defaultValue="1" aria-label="Frame" />
        <Space $w={5} />
        {['first', 'prev', 'play', 'next', 'last'].map((n) => (
          <Btn key={n} $w={18} $h={19} aria-label={n}><Icon name={n} size={15} /></Btn>
        ))}
        <Space $w={5} />
        <Btn $w={18} aria-label="Lock frame"><Icon name="lock" size={15} /></Btn>
        <Space $w={11} />
        <Range min={1} max={100} defaultValue={1} aria-label="Timeline" />
        <Divider />
        <Icon name="stop" size={14} />
        <Count>0</Count>
        <Icon name="warn" size={14} />
        <Count>0</Count>
      </BottomBar>
    </Shell>
  );
}
